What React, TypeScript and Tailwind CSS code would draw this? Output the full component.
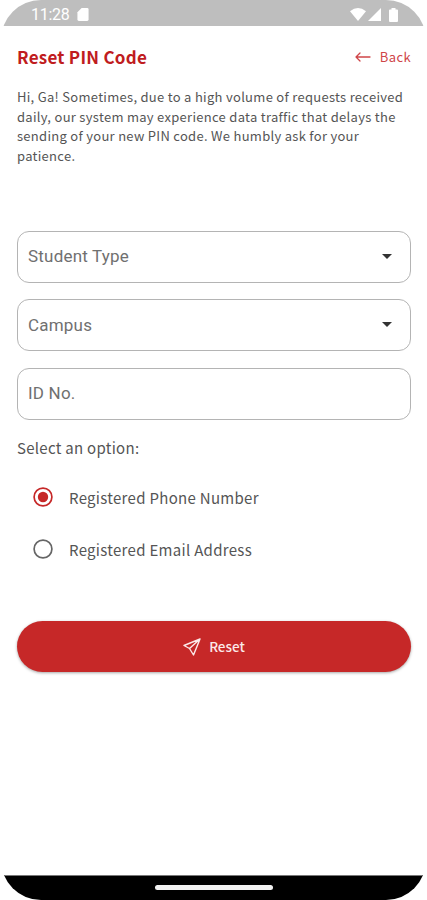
import type { ReactNode } from "react";

type FieldProps = {
  label: string;
  dropdown?: boolean;
};

type OptionProps = {
  label: string;
  checked?: boolean;
};

function StatusBar() {
  return (
    <header className="flex h-[26px] shrink-0 items-center justify-between bg-[#bebebe] pl-[30px] pr-[28px] pt-[3px] text-white">
      <div className="flex items-center gap-[8px]">
        <span className="font-['Roboto',sans-serif] text-[16px] leading-[20px] tracking-[-0.3px]">
          11:28
        </span>
        <svg width="12" height="13" viewBox="0 0 12 14" fill="currentColor">
          <path d="M4.5 0H10.5Q12 0 12 1.5V12.5Q12 14 10.5 14H1.5Q0 14 0 12.5V4.5Z" />
        </svg>
      </div>
      <div className="flex items-center">
        <svg width="16" height="13" viewBox="0 0 16 13" fill="currentColor">
          <path d="M8 13L0 3.2Q8-3 16 3.2Z" />
        </svg>
        <svg className="ml-[2px]" width="13" height="13" viewBox="0 0 13 13" fill="currentColor">
          <path d="M13 0V13H0Z" />
        </svg>
        <svg className="ml-[8px]" width="9" height="14" viewBox="0 0 9 14" fill="currentColor">
          <path d="M2.5 1.5V0H6.5V1.5H8Q9 1.5 9 2.5V13Q9 14 8 14H1Q0 14 0 13V2.5Q0 1.5 1 1.5Z" />
        </svg>
      </div>
    </header>
  );
}

function Field({ label, dropdown }: FieldProps) {
  return (
    <div className="flex h-[52px] items-center justify-between rounded-[12px] border-[1.5px] border-[#b4b4b4] pl-[10px] pr-[18px] font-['Roboto',sans-serif] text-[17px] tracking-[0.2px] text-[#707070]">
      <span>{label}</span>
      {dropdown && (
        <svg className="mb-[2px]" width="10" height="5" viewBox="0 0 10 5" fill="#333333">
          <path d="M0 0H10L5 5Z" />
        </svg>
      )}
    </div>
  );
}

function Option({ label, checked }: OptionProps) {
  return (
    <label className="flex h-[52px] items-center pl-[16px]">
      <svg
        className={checked ? "text-[#c62828]" : "text-[#666666]"}
        width="20"
        height="20"
        viewBox="0 0 20 20"
      >
        <circle cx="10" cy="10" r="8.9" fill="none" stroke="currentColor" strokeWidth="1.7" />
        {checked && <circle cx="10" cy="10" r="5.2" fill="currentColor" />}
      </svg>
      <span className="ml-[16px] pt-[2px] text-[15px] leading-[24px] tracking-[0.3px]">{label}</span>
    </label>
  );
}

function Phone({ children }: { children: ReactNode }) {
  return (
    <div className="mx-[1px] flex h-[900px] flex-col overflow-hidden rounded-[40px] bg-white font-['Noto_Sans_CJK_JP',sans-serif] text-[#555555]">
      {children}
    </div>
  );
}

export default function App() {
  return (
    <Phone>
      <StatusBar />

      <main className="flex flex-1 flex-col pl-[16px] pr-[15px]">
        <div className="mt-[17px] flex h-[28px] items-center justify-between">
          <h1 className="text-[17px] font-bold leading-[28px] tracking-[0.25px] text-[#c01c20]">
            Reset PIN Code
          </h1>
          <a
            href="#"
            className="flex items-center gap-[9px] text-[13px] leading-[24px] tracking-[0.4px] text-[#cf4548]"
          >
            <svg
              width="16"
              height="10"
              viewBox="0 0 16 10"
              fill="none"
              stroke="currentColor"
              strokeWidth="1.3"
              strokeLinecap="round"
              strokeLinejoin="round"
            >
              <path d="M15 5H1M5 1L1 5L5 9" />
            </svg>
            Back
          </a>
        </div>

        <p className="mt-[16px] whitespace-nowrap text-[13px] leading-[19.5px] tracking-[0.29px]">
          Hi, Ga! Sometimes, due to a high volume of requests received
          <br />
          daily, our system may experience data traffic that delays the
          <br />
          sending of your new PIN code. We humbly ask for your
          <br />
          patience.
        </p>

        <form className="mt-[66px] flex flex-col">
          <div className="flex flex-col gap-[16.25px]">
            <Field label="Student Type" dropdown />
            <Field label="Campus" dropdown />
            <Field label="ID No." />
          </div>

          <p className="mt-[16px] text-[15px] leading-[24px] tracking-[0.28px]">Select an option:</p>
          <div className="mt-[11.5px]">
            <Option label="Registered Phone Number" checked />
            <Option label="Registered Email Address" />
          </div>

          <button
            type="button"
            className="mt-[46px] flex h-[51px] items-center justify-center gap-[8px] rounded-full bg-[#c62828] text-[13.5px] font-medium leading-[24px] text-[#fbe9e9] shadow-[0_1px_3px_rgba(0,0,0,0.35)]"
          >
            <svg
              width="18"
              height="18"
              viewBox="0 0 18 18"
              fill="none"
              stroke="currentColor"
              strokeWidth="1.4"
              strokeLinejoin="round"
            >
              <path d="M17 1L1 7.5L6.5 10.5L10.5 17ZM17 1L6.5 10.5" />
            </svg>
            <span className="pb-[2px]">Reset</span>
          </button>
        </form>
      </main>

      <footer className="flex h-[25px] shrink-0 justify-center border-t border-[#777777] bg-black pt-[9px]">
        <div className="h-[5px] w-[118px] rounded-full bg-[#f2f2f2]" />
      </footer>
    </Phone>
  );
}
